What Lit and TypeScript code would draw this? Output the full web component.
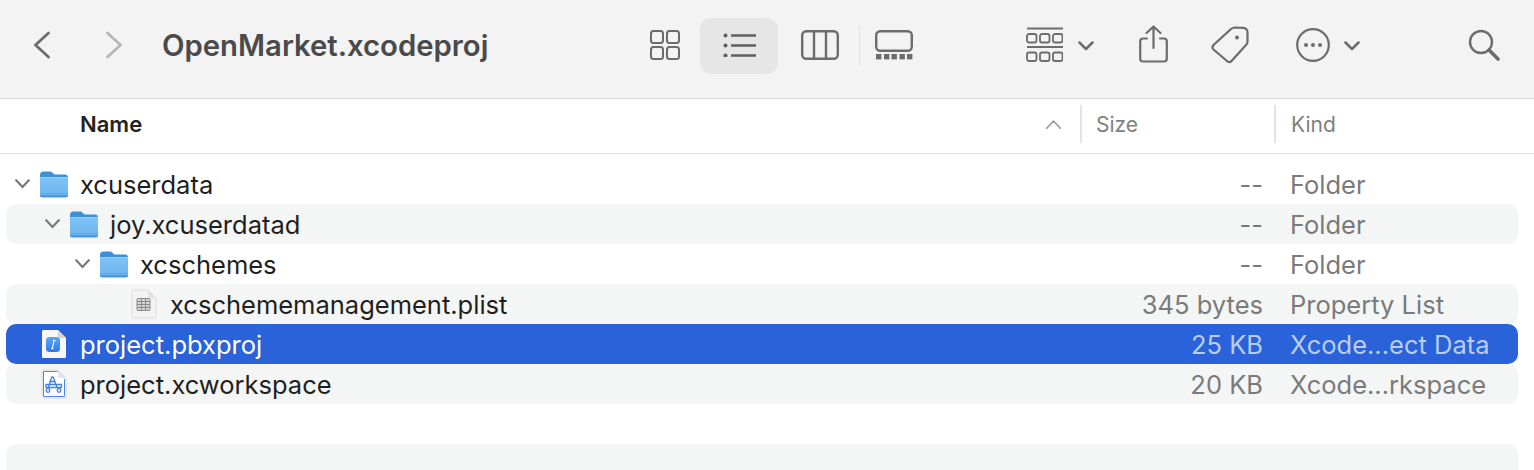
import { LitElement, html, css, svg } from "lit";
import { customElement } from "lit/decorators.js";

const folder = svg`<svg class="ficon" width="30" height="28" viewBox="0 0 30 28">
  <defs><linearGradient id="fb" x1="0" y1="0" x2="0" y2="1"><stop offset="0" stop-color="#80c3f5"/><stop offset="1" stop-color="#6cb5ef"/></linearGradient></defs>
  <path d="M1 5.500C1 3 2.200 1.500 4.500 1.500H11C12.500 1.500 13 2.200 14 3.200C14.800 4 15.500 4.400 16.500 4.400H26C28 4.400 29 5.500 29 7.500V10H1Z" fill="#3d8fd9"/>
  <rect x="1" y="7" width="28" height="20" rx="2" fill="url(#fb)"/>
  <rect x="1" y="7" width="28" height="1" fill="#9ad2f8"/>
  <rect x="1" y="23" width="28" height="1" fill="#5da7e3"/>
  <path d="M1 25.500C1 26.500 2 27.500 3 27.500H27C28 27.500 29 26.500 29 25.500V25H1Z" fill="#4f97d6"/>
</svg>`;

const plist = svg`<svg class="file" width="26" height="30" viewBox="0 0 26 30">
  <path d="M1 2.500C1 1.500 1.500 1 2.500 1H17L25 9V27.500C25 28.500 24.500 29 23.500 29H2.500C1.500 29 1 28.500 1 27.500Z" fill="#f3f3f3" stroke="#dcdcdc" stroke-width="1"/>
  <path d="M17 1V7.500C17 8.500 17.500 9 18.500 9H25Z" fill="#e2e2e2"/>
  <g fill="none" stroke="#8a8a8a" stroke-width="1"><rect x="6" y="9.500" width="13" height="12" rx="1" fill="#d4d4d4"/><path d="M6 12.500H19M6 15.500H19M6 18.500H19M10.500 9.500V21.500M14.500 9.500V21.500"/></g>
</svg>`;

const pbx = svg`<svg class="file" width="26" height="30" viewBox="0 0 26 30">
  <defs><linearGradient id="pb" x1="0" y1="0" x2="0" y2="1"><stop offset="0" stop-color="#5aa6f8"/><stop offset="1" stop-color="#2f7bee"/></linearGradient></defs>
  <path d="M1 2.500C1 1.500 1.500 1 2.500 1H17L25 9V27.500C25 28.500 24.500 29 23.500 29H2.500C1.500 29 1 28.500 1 27.500Z" fill="#f7f7f7"/>
  <path d="M17 1V7.500C17 8.500 17.500 9 18.500 9H25Z" fill="#d5d5d5"/>
  <rect x="5" y="8" width="14" height="15" rx="3.500" fill="url(#pb)"/>
  <path d="M12 11.500H14.500M13.200 11.500L11.200 19.500M10 19.500H12.500" fill="none" stroke="#fff" stroke-width="1.100"/>
</svg>`;

const workspace = svg`<svg class="file" width="26" height="30" viewBox="0 0 26 30">
  <path d="M1 2.500C1 1.500 1.500 1 2.500 1H17L25 9V27.500C25 28.500 24.500 29 23.500 29H2.500C1.500 29 1 28.500 1 27.500Z" fill="#fff" stroke="#d8d8d8"/>
  <path d="M2.500 27V2.500H16.500M2.500 27.500H23.500V10" fill="none" stroke="#4a86e8" stroke-width="1"/>
  <path d="M17 1V7.500C17 8.500 17.500 9 18.500 9H25Z" fill="#dce6f7"/>
  <g fill="none" stroke="#3f7fe6" stroke-width="1.300"><path d="M11 8L9 12.500L14 12.500L12 8ZM9.500 12.500L7.500 18M13.500 12.500L16 18M5 15.500H20.500V18.500H5Z"/><circle cx="7" cy="21.500" r="1.800"/><circle cx="18" cy="21.500" r="1.800"/></g>
</svg>`;

const icons: Record<string, unknown> = { folder, plist, pbx, workspace };

const chevDown = svg`<svg class="chev" width="15" height="10" viewBox="0 0 15 10"><path d="M1.200 1.200L7.500 8L13.800 1.200" fill="none" stroke="#7a7a7a" stroke-width="2.200" stroke-linecap="round" stroke-linejoin="round"/></svg>`;
const tbChev = svg`<svg class="tbchev" width="16" height="10" viewBox="0 0 16 10"><path d="M1.500 1.500L8 8L14.500 1.500" fill="none" stroke="#6c6c6c" stroke-width="2.500" stroke-linecap="round" stroke-linejoin="round"/></svg>`;

interface Row { name: string; size: string; kind: string; icon?: string; indent: number; open?: boolean; selected?: boolean; }

const rows: Row[] = [
  { name: "xcuserdata", size: "--", kind: "Folder", icon: "folder", indent: 0, open: true },
  { name: "joy.xcuserdatad", size: "--", kind: "Folder", icon: "folder", indent: 1, open: true },
  { name: "xcschemes", size: "--", kind: "Folder", icon: "folder", indent: 2, open: true },
  { name: "xcschememanagement.plist", size: "345 bytes", kind: "Property List", icon: "plist", indent: 3 },
  { name: "project.pbxproj", size: "25 KB", kind: "Xcode...ect Data", icon: "pbx", indent: 0, selected: true },
  { name: "project.xcworkspace", size: "20 KB", kind: "Xcode...rkspace", icon: "workspace", indent: 0 },
];

@customElement("app-root")
export class AppRoot extends LitElement {
  static styles = css`
    :host { display: block; width: 1534px; height: 470px; overflow: hidden; background: #fff; font-family: Inter, "Liberation Sans", sans-serif; }
    svg { display: block; flex: none; }
    .toolbar { box-sizing: border-box; background: #f3f3f3; border-bottom: 1px solid #dadada; height: 99px; display: flex; align-items: flex-start; }
    .back { margin: 31px 0 0 33px; }
    .fwd { margin: 31px 0 0 54px; }
    .title { margin: 26px 0 0 39px; width: 488px; font-size: 29.300px; line-height: 40px; font-weight: 600; color: #4a4a4a; white-space: nowrap; }
    .grid-i { margin-top: 30px; }
    .pill { width: 78px; height: 56px; border-radius: 11px; background: #e6e6e6; margin: 18px 0 0 20px; display: flex; align-items: center; justify-content: center; }
    .pill svg { margin-bottom: 3px; }
    .cols { margin: 30px 0 0 23px; }
    .sep { width: 1px; height: 40px; background: #e2e2e2; margin: 26px 0 0 20px; }
    .gallery { margin: 30px 0 0 15px; }
    .group { margin: 27px 0 0 113px; }
    .g-chev { margin: 41px 0 0 15px; }
    .share { margin: 25px 0 0 45px; }
    .tag { margin: 26px 0 0 43px; }
    .more { margin: 28px 0 0 47px; }
    .m-chev { margin: 41px 0 0 14px; }
    .search { margin: 29px 0 0 108px; }

    .header { box-sizing: border-box; border-bottom: 1px solid #e0e0e0; display: grid; grid-template-columns: 1080px 194px 1fr; align-items: center; background: #fff; height: 55px; padding-bottom: 4px; }
    .h-name { display: flex; justify-content: space-between; align-items: center; padding: 0 19px 0 80px; font-size: 22px; font-weight: 600; color: #222; }
    .h-col { height: 38px; border-left: 2px solid #e4e4e4; display: flex; align-items: center; padding-left: 14px; font-size: 21px; color: #808080; box-sizing: border-box; }
    .h-col.kind { padding-left: 15px; }

    .list { padding: 10px 16px 0 6px; }
    .row { height: 40px; display: grid; grid-template-columns: 1fr 160px 228px; align-items: center; font-size: 25.500px; color: #1f1f1f; border-radius: 10px; }
    .row.striped { background: #f4f5f5; }
    .row.selected { background: #2962d9; color: #fff; }
    .name { display: flex; align-items: center; }
    .twist { width: 34px; flex: none; padding-left: 9px; box-sizing: border-box; }
    .ic { width: 40px; flex: none; }
    .ficon { margin: -1px 0 0 -1px; }
    .file { margin-left: 1px; }
    .size { text-align: right; padding-right: 27px; color: #7a7a7a; white-space: nowrap; }
    .kindc { color: #7a7a7a; white-space: nowrap; }
    .row.selected .size, .row.selected .kindc { color: #bccdf3; }
    .nametext { white-space: nowrap; }
  `;

  private toolbar() {
    return html`<div class="toolbar">
      <svg class="back" width="18" height="28" viewBox="0 0 18 28"><path d="M15.500 2L2.500 14L15.500 26" fill="none" stroke="#6c6c6c" stroke-width="2.800" stroke-linecap="round" stroke-linejoin="round"/></svg>
      <svg class="fwd" width="18" height="28" viewBox="0 0 18 28"><path d="M2.500 2L15.500 14L2.500 26" fill="none" stroke="#b6b6b6" stroke-width="2.800" stroke-linecap="round" stroke-linejoin="round"/></svg>
      <div class="title">OpenMarket.xcodeproj</div>
      <svg class="grid-i" width="30" height="30" viewBox="0 0 30 30" fill="none" stroke="#6c6c6c" stroke-width="2"><rect x="1" y="1" width="12" height="12" rx="2.500"/><rect x="17" y="1" width="12" height="12" rx="2.500"/><rect x="1" y="17" width="12" height="12" rx="2.500"/><rect x="17" y="17" width="12" height="12" rx="2.500"/></svg>
      <div class="pill"><svg width="33" height="24" viewBox="0 0 33 24"><g fill="#5f5f5f"><circle cx="2.500" cy="2.500" r="2"/><circle cx="2.500" cy="12.500" r="2"/><circle cx="2.500" cy="22.500" r="2"/></g><path d="M8 2.500H33M8 12.500H33M8 22.500H33" stroke="#5f5f5f" stroke-width="2.400" fill="none"/></svg></div>
      <svg class="cols" width="38" height="30" viewBox="0 0 38 30" fill="none" stroke="#6c6c6c" stroke-width="2.400"><rect x="1.200" y="1.200" width="35.600" height="27.600" rx="4"/><path d="M13 1.200V28.800M25 1.200V28.800"/></svg>
      <div class="sep"></div>
      <svg class="gallery" width="38" height="30" viewBox="0 0 38 30"><rect x="1.200" y="1.200" width="35.600" height="19.600" rx="4" fill="none" stroke="#6c6c6c" stroke-width="2.400"/><g fill="#6c6c6c"><rect x="1" y="24" width="5.400" height="5.400"/><rect x="9" y="24" width="5.400" height="5.400"/><rect x="16.500" y="24" width="5.400" height="5.400"/><rect x="24.500" y="24" width="5.400" height="5.400"/><rect x="32" y="24" width="5.400" height="5.400"/></g></svg>
      <svg class="group" width="37" height="36" viewBox="0 0 37 36" fill="none" stroke="#6c6c6c"><path d="M1 1.500H37M1 20H37" stroke-width="2"/><g stroke-width="1.800"><rect x="1" y="7" width="9.500" height="8.500" rx="2"/><rect x="14" y="7" width="9.500" height="8.500" rx="2"/><rect x="27" y="7" width="9.500" height="8.500" rx="2"/><rect x="1" y="25.500" width="9.500" height="8.500" rx="2"/><rect x="14" y="25.500" width="9.500" height="8.500" rx="2"/><rect x="27" y="25.500" width="9.500" height="8.500" rx="2"/></g></svg>
      <span class="g-chev">${tbChev}</span>
      <svg class="share" width="29" height="38" viewBox="0 0 29 38" fill="none" stroke="#6c6c6c" stroke-width="2.200" stroke-linecap="round" stroke-linejoin="round"><path d="M8 13.500H4C2 13.500 1.200 14.500 1.200 16.500V33.500C1.200 35.500 2 36.500 4 36.500H25C27 36.500 27.800 35.500 27.800 33.500V16.500C27.800 14.500 27 13.500 25 13.500H21"/><path d="M14.500 23V1.500M7.500 8L14.500 1.500L21.500 8"/></svg>
      <svg class="tag" width="38" height="38" viewBox="0 0 38 38" fill="none" stroke="#6c6c6c" stroke-width="2.200" stroke-linejoin="round"><path d="M2.500 19L20 3C21.500 1.800 22.500 1.500 24 1.500L32 1.800C35 2 36.500 3.500 36.500 6.500V15.500C36.500 17 36 18 35 19L21 34.500C19.500 36.500 17.500 36.500 16 35L2.500 23.500C1 22 1 20.500 2.500 19Z"/><circle cx="26" cy="11.500" r="2" fill="#6c6c6c" stroke="none"/></svg>
      <svg class="more" width="34" height="34" viewBox="0 0 34 34"><circle cx="17" cy="17" r="15.800" fill="none" stroke="#6c6c6c" stroke-width="2.200"/><g fill="#6c6c6c"><circle cx="10" cy="17" r="2"/><circle cx="17" cy="17" r="2"/><circle cx="24" cy="17" r="2"/></g></svg>
      <span class="m-chev">${tbChev}</span>
      <svg class="search" width="32" height="32" viewBox="0 0 32 32" fill="none" stroke="#6c6c6c"><circle cx="13" cy="13" r="11" stroke-width="2.400"/><path d="M21 21L30 30" stroke-width="3.600" stroke-linecap="round"/></svg>
    </div>`;
  }

  private header() {
    return html`<div class="header">
      <div class="h-name"><span>Name</span><svg width="15" height="9" viewBox="0 0 15 9"><path d="M0.700 8.300L7.500 1L14.300 8.300" fill="none" stroke="#999" stroke-width="1.600" stroke-linecap="round" stroke-linejoin="round"/></svg></div>
      <div class="h-col">Size</div>
      <div class="h-col kind">Kind</div>
    </div>`;
  }

  private rowTpl(r: Row, i: number) {
    const cls = `row ${i % 2 === 1 ? "striped" : ""} ${r.selected ? "selected" : ""}`;
    return html`<div class=${cls}>
      <div class="name" style="padding-left:${r.indent * 30}px">
        <div class="twist">${r.open ? chevDown : ""}</div>
        <div class="ic">${icons[r.icon ?? ""]}</div>
        <div class="nametext">${r.name}</div>
      </div>
      <div class="size">${r.size}</div>
      <div class="kindc">${r.kind}</div>
    </div>`;
  }

  render() {
    const padded: Row[] = [...rows, { name: "", size: "", kind: "", indent: 0 }, { name: "", size: "", kind: "", indent: 0 }];
    return html`${this.toolbar()}${this.header()}
      <div class="list">${padded.map((r, i) => this.rowTpl(r, i))}</div>`;
  }
}
